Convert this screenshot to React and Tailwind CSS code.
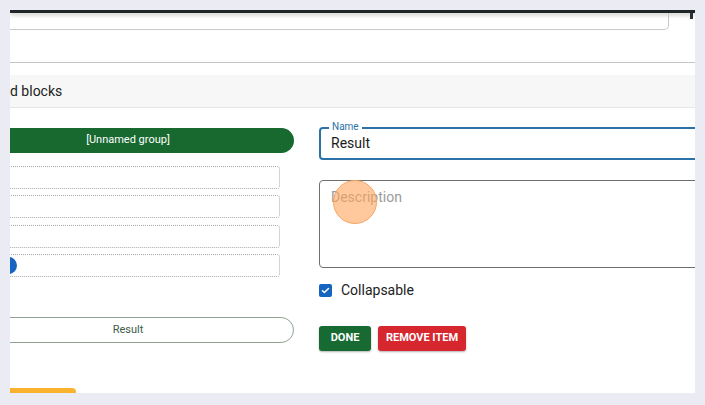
import React from 'react';

function DottedRow({ children }) {
  return (
    <div className="h-[23px] mx-[14px] border border-dotted border-[#a3aea3] rounded-[3px] flex items-center">
      {children}
    </div>
  );
}

export default function App() {
  return (
    <div className="w-[705px] h-[405px] bg-[#ebebf3] pt-[10px] px-[10px] font-['Roboto',sans-serif]">
      <div className="relative h-[383px] bg-white overflow-hidden">
        {/* top strip */}
        <div className="h-[3px] bg-[#1f2529] shadow-[0_2px_4px_rgba(0,0,0,0.25)]" />
        <div className="flex justify-between">
          <div className="h-[17px] w-[659px] border-r border-b border-[#c9c9c9] rounded-br-[5px]" />
          <div className="w-[3px] h-[6px] bg-[#2b3034] mr-[2px]" />
        </div>
        <div className="h-[33px] border-b border-[#c4c4c4]" />
        <div className="h-[12px]" />
        <div className="h-[33px] bg-[#f7f7f7] border-b border-[#e6e6e6] flex items-center text-[14px] text-[#222]">
          d blocks
        </div>

        {/* body */}
        <div className="flex gap-[25px] pt-[19px]">
          <div className="ml-[-48px] mt-[1px] w-[332px] shrink-0 flex flex-col">
            <div className="h-[25px] rounded-full bg-[#17692f] text-white text-[11px] flex items-center justify-center">
              [Unnamed group]
            </div>
            <div className="mt-[13px] flex flex-col gap-[6.4px]">
              <DottedRow />
              <DottedRow />
              <DottedRow />
              <DottedRow>
                <div className="ml-[23px] w-[17px] h-[17px] rounded-full bg-[#1565c0]" />
              </DottedRow>
            </div>
            <div className="mt-[40px] h-[26px] rounded-full border border-[#8ea391] text-[#3e5c44] text-[11px] flex items-center justify-center">
              Result
            </div>
            <div className="mt-[45px] ml-[-10px] w-[124px] h-[30px] rounded-[4px] bg-[#f9b12e]" />
          </div>

          <div className="w-[420px] shrink-0 flex flex-col">
            <div className="relative h-[33px] border-2 border-[#2a72a8] rounded-[4px] flex items-center pl-[10px] text-[14px] text-[#1b1b1b]">
              <span className="absolute left-[8px] top-[-8px] bg-white px-[3px] text-[10px] leading-[12px] text-[#2a72a8]">Name</span>
              Result
            </div>
            <div className="relative mt-[20px] h-[88px] border border-[#6f6f6f] rounded-[4px] pl-[11px] pt-[6px] text-[14px] text-[#9a9a9a]">
              Description
              <div className="absolute left-[13px] top-[-1px] w-[44px] h-[44px] rounded-full bg-[#ffa55c]/60 border border-[#f6a463]" />
            </div>
            <div className="mt-[12px] flex items-center gap-[9px] text-[14px] text-[#222]">
              <div className="w-[13px] h-[13px] rounded-[2px] bg-[#1565c0] flex items-center justify-center">
                <svg width="9" height="9" viewBox="0 0 24 24" fill="none" stroke="white" strokeWidth="4" strokeLinecap="round" strokeLinejoin="round">
                  <path d="M4 12.5l5 5L20 6.5" />
                </svg>
              </div>
              Collapsable
            </div>
            <div className="mt-[25px] flex gap-[7px]">
              <button className="h-[25px] w-[52px] rounded-[3px] bg-[#176b32] text-white text-[11px] font-bold shadow-[0_1px_2px_rgba(0,0,0,0.3)]">
                DONE
              </button>
              <button className="h-[25px] w-[88px] rounded-[3px] bg-[#d6262e] text-white text-[11px] font-bold shadow-[0_1px_2px_rgba(0,0,0,0.3)]">
                REMOVE ITEM
              </button>
            </div>
          </div>
        </div>
      </div>
    </div>
  );
}
